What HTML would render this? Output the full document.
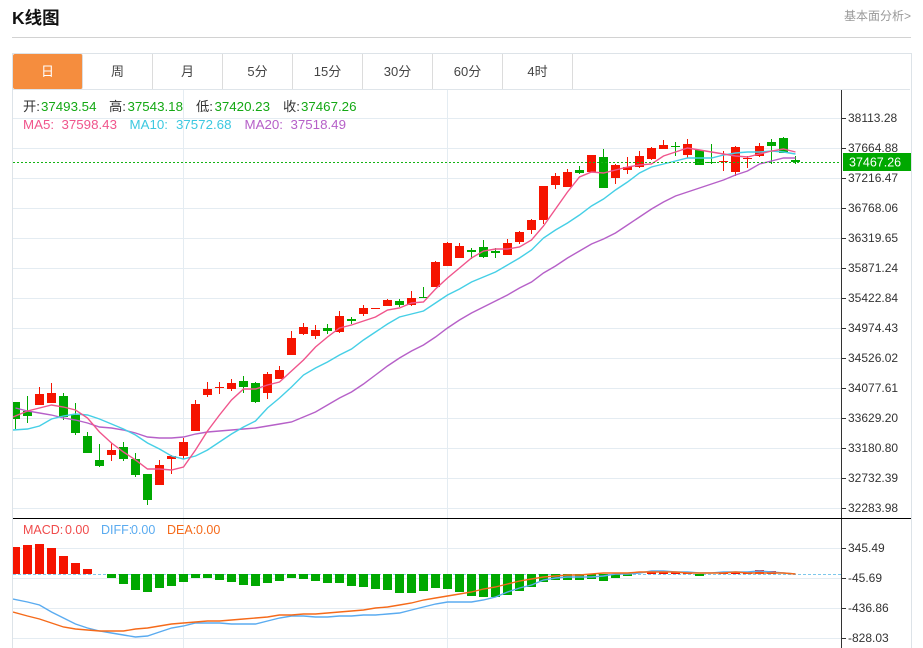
<!DOCTYPE html>
<html lang="zh"><head><meta charset="utf-8"><title>K线图</title>
<style>
html,body{margin:0;padding:0;background:#fff;width:923px;height:648px;overflow:hidden}
body{position:relative;font-family:"Liberation Sans","Noto Sans CJK SC",sans-serif;color:#333}
.a{position:absolute;white-space:nowrap}
.t{position:absolute;top:54px;width:69px;height:35px;line-height:35px;text-align:center;font-size:13px;color:#444;border-right:1px solid #dcdcdc}
svg{position:absolute;left:0;top:0}
svg text{font-family:"Liberation Sans","Noto Sans CJK SC",sans-serif}
</style></head><body>
<div class="a" style="left:12px;top:7px;font-size:17.5px;line-height:22px;font-weight:bold;color:#111">K线图</div>
<div class="a" style="right:12px;top:8px;font-size:12px;line-height:16px;color:#999">基本面分析&gt;</div>
<div class="a" style="left:12px;top:37px;width:899px;height:1px;background:#d2d2d2"></div>
<div class="a" style="left:12px;top:53px;width:898px;height:595px;border:1px solid #dde3e8;border-bottom:0"></div>
<div class="a" style="left:13px;top:89px;width:897px;height:1px;background:#dfe5ea"></div>
<div class="t" style="left:13px;background:#f58d3e;color:#fff;border-radius:2px;border-right:1px solid #dcdcdc">日</div>
<div class="t" style="left:83px">周</div>
<div class="t" style="left:153px">月</div>
<div class="t" style="left:223px">5分</div>
<div class="t" style="left:293px">15分</div>
<div class="t" style="left:363px">30分</div>
<div class="t" style="left:433px">60分</div>
<div class="t" style="left:503px">4时</div>
<svg width="923" height="648" viewBox="0 0 923 648">
<defs><clipPath id="c"><rect x="13" y="90" width="828" height="558"/></clipPath></defs>
<path stroke="#e4ecf2" stroke-width="1" fill="none" d="M13 118.5H841M13 148.5H841M13 178.5H841M13 208.5H841M13 238.5H841M13 268.5H841M13 298.5H841M13 328.5H841M13 358.5H841M13 388.5H841M13 418.5H841M13 448.5H841M13 478.5H841M13 508.5H841M13 548.5H841M13 578.5H841M13 608.5H841M13 638.5H841M183.5 90V648M447.5 90V648"/>
<g clip-path="url(#c)">
<path stroke="#f51400" stroke-width="1" fill="none" d="M39.5 387V405M51.5 383V403M111.5 443V461M159.5 460V485M171.5 455V474M183.5 438V459M195.5 400V431M207.5 382V397M219.5 382V394M231.5 379V391M267.5 372V399M279.5 366V379M291.5 331V355M303.5 323V335M315.5 325V339M339.5 311V333M363.5 305V316M375.5 308V309M387.5 299V306M411.5 291V306M435.5 261V287M447.5 242V266M459.5 243V258M507.5 239V255M519.5 231V244M531.5 219V234M543.5 186V224M555.5 173V189M567.5 169V187M591.5 155V172M615.5 164V184M627.5 157V174M639.5 151V168M651.5 147V160M663.5 140V149M687.5 139V158M723.5 151V171M735.5 146V176M747.5 156V168M759.5 143V157"/>
<path stroke="#00a800" stroke-width="1" fill="none" d="M15.5 402V429M27.5 396V423M63.5 393V420M75.5 403V435M87.5 432V453M99.5 444V467M123.5 442V461M135.5 453V477M147.5 474V505M243.5 376V393M255.5 382V403M327.5 324V334M351.5 317V324M399.5 299V307M423.5 287V298M471.5 248V259M483.5 240V258M495.5 248V258M579.5 166V174M603.5 149V188M675.5 142V156M699.5 150V165M711.5 144V164M771.5 139V164M783.5 137V153M795.5 156V164"/>
<path fill="#f51400" d="M35 394h9V405h-9zM47 393h9V403h-9zM107 450h9V455h-9zM155 465h9V485h-9zM167 456h9V459h-9zM179 442h9V456h-9zM191 404h9V431h-9zM203 389h9V395h-9zM215 387h9V388h-9zM227 383h9V389h-9zM263 374h9V393h-9zM275 370h9V379h-9zM287 338h9V355h-9zM299 327h9V334h-9zM311 330h9V336h-9zM335 316h9V332h-9zM359 308h9V314h-9zM371 308h9V309h-9zM383 300h9V306h-9zM407 298h9V305h-9zM431 262h9V287h-9zM443 243h9V266h-9zM455 246h9V258h-9zM503 243h9V255h-9zM515 232h9V242h-9zM527 220h9V230h-9zM539 186h9V220h-9zM551 176h9V185h-9zM563 172h9V187h-9zM587 155h9V172h-9zM611 165h9V178h-9zM623 167h9V170h-9zM635 156h9V167h-9zM647 148h9V159h-9zM659 145h9V149h-9zM683 144h9V155h-9zM719 161h9V162h-9zM731 147h9V172h-9zM743 158h9V159h-9zM755 146h9V156h-9z"/>
<path fill="#00a800" d="M11 402h9V419h-9zM23 411h9V416h-9zM59 396h9V417h-9zM71 415h9V433h-9zM83 436h9V453h-9zM95 460h9V466h-9zM119 447h9V459h-9zM131 459h9V475h-9zM143 474h9V500h-9zM239 381h9V387h-9zM251 383h9V402h-9zM323 328h9V331h-9zM347 319h9V321h-9zM395 301h9V305h-9zM419 297h9V298h-9zM467 250h9V252h-9zM479 247h9V257h-9zM491 251h9V253h-9zM575 170h9V173h-9zM599 157h9V188h-9zM671 146h9V147h-9zM695 150h9V165h-9zM707 162h9V163h-9zM767 142h9V146h-9zM779 138h9V153h-9zM791 160h9V162h-9z"/>
<polyline fill="none" stroke="#b660c8" stroke-width="1.4" points="15.5,408 27.5,411 39.5,413 51.5,415 63.5,418 75.5,420 87.5,423 99.5,427 111.5,428 123.5,430 135.5,433 147.5,437 159.5,438 171.5,438 183.5,437 195.5,434 207.5,432 219.5,431 231.5,430 243.5,429 255.5,428 267.5,426 279.5,424 291.5,422 303.5,417 315.5,412 327.5,405 339.5,398 351.5,392 363.5,384 375.5,375 387.5,366 399.5,358 411.5,351 423.5,345 435.5,337 447.5,328 459.5,320 471.5,313 483.5,307 495.5,301 507.5,295 519.5,288 531.5,282 543.5,273 555.5,266 567.5,258 579.5,251 591.5,244 603.5,239 615.5,233 627.5,225 639.5,217 651.5,209 663.5,202 675.5,196 687.5,192 699.5,188 711.5,184 723.5,180 735.5,175 747.5,171 759.5,164 771.5,161 783.5,158 795.5,158"/>
<polyline fill="none" stroke="#45cfe6" stroke-width="1.4" points="13,430 27.5,429 39.5,426 51.5,419 63.5,416 75.5,414 87.5,415 99.5,419 111.5,424 123.5,429 135.5,435 147.5,443 159.5,449 171.5,456 183.5,459 195.5,456 207.5,450 219.5,442 231.5,434 243.5,427 255.5,421 267.5,408 279.5,398 291.5,387 303.5,375 315.5,368 327.5,362 339.5,355 351.5,349 363.5,340 375.5,332 387.5,324 399.5,317 411.5,314 423.5,311 435.5,303 447.5,295 459.5,289 471.5,282 483.5,277 495.5,272 507.5,265 519.5,258 531.5,250 543.5,238 555.5,230 567.5,223 579.5,215 591.5,206 603.5,199 615.5,190 627.5,182 639.5,173 651.5,167 663.5,164 675.5,161 687.5,158 699.5,158 711.5,158 723.5,155 735.5,153 747.5,152 759.5,152 771.5,151 783.5,152 795.5,154"/>
<polyline fill="none" stroke="#f0558c" stroke-width="1.4" points="13,417 27.5,411 39.5,408 51.5,405 63.5,407 75.5,410 87.5,418 99.5,432 111.5,443 123.5,452 135.5,460 147.5,469 159.5,469 171.5,470 183.5,467 195.5,450 207.5,431 219.5,415 231.5,400 243.5,389 255.5,389 267.5,385 279.5,382 291.5,371 303.5,360 315.5,347 327.5,337 339.5,328 351.5,325 363.5,321 375.5,317 387.5,310 399.5,308 411.5,303 423.5,302 435.5,289 447.5,278 459.5,268 471.5,258 483.5,251 495.5,249 507.5,249 519.5,247 531.5,240 543.5,226 555.5,209 567.5,192 579.5,177 591.5,172 603.5,173 615.5,170 627.5,167 639.5,165 651.5,164 663.5,156 675.5,152 687.5,148 699.5,150 711.5,152 723.5,154 735.5,156 747.5,157 759.5,154 771.5,151 783.5,149 795.5,152"/>
<path stroke="#14b414" stroke-width="1" stroke-dasharray="2 2" fill="none" d="M13 162.5H841"/>
<path stroke="#7cc8ec" stroke-width="1" stroke-dasharray="3 2" fill="none" d="M13 574.5H841"/>
<path fill="#f51400" d="M11 547h9V574h-9zM23 545h9V574h-9zM35 544h9V574h-9zM47 548h9V574h-9zM59 556h9V574h-9zM71 563h9V574h-9zM83 569h9V574h-9zM623 573h9V574h-9zM647 572h9V574h-9zM659 572h9V574h-9zM671 572h9V574h-9zM683 573h9V574h-9zM719 572h9V574h-9zM731 572h9V574h-9zM743 572h9V574h-9zM755 570h9V574h-9zM767 571h9V574h-9z"/>
<path fill="#00a800" d="M107 574h9V578h-9zM119 574h9V584h-9zM131 574h9V590h-9zM143 574h9V592h-9zM155 574h9V588h-9zM167 574h9V586h-9zM179 574h9V582h-9zM191 574h9V578h-9zM203 574h9V578h-9zM215 574h9V580h-9zM227 574h9V582h-9zM239 574h9V585h-9zM251 574h9V586h-9zM263 574h9V583h-9zM275 574h9V581h-9zM287 574h9V578h-9zM299 574h9V579h-9zM311 574h9V581h-9zM323 574h9V583h-9zM335 574h9V583h-9zM347 574h9V586h-9zM359 574h9V587h-9zM371 574h9V589h-9zM383 574h9V590h-9zM395 574h9V593h-9zM407 574h9V593h-9zM419 574h9V591h-9zM431 574h9V588h-9zM443 574h9V589h-9zM455 574h9V592h-9zM467 574h9V596h-9zM479 574h9V597h-9zM491 574h9V597h-9zM503 574h9V595h-9zM515 574h9V591h-9zM527 574h9V587h-9zM539 574h9V582h-9zM551 574h9V580h-9zM563 574h9V580h-9zM575 574h9V580h-9zM587 574h9V579h-9zM599 574h9V581h-9zM611 574h9V578h-9zM623 574h9V576h-9zM695 574h9V576h-9z"/>
<polyline fill="none" stroke="#5aabf0" stroke-width="1.4" points="13,599 27.5,602 39.5,605 51.5,612 63.5,618 75.5,624 87.5,628 99.5,631 111.5,633 123.5,635 135.5,637 147.5,636 159.5,632 171.5,628 183.5,626 195.5,623 207.5,623 219.5,623 231.5,624 243.5,624 255.5,624 267.5,621 279.5,618 291.5,616 303.5,616 315.5,617 327.5,617 339.5,616 351.5,616 363.5,615 375.5,615 387.5,614 399.5,613 411.5,610 423.5,607 435.5,604 447.5,602 459.5,602 471.5,602 483.5,600 495.5,597 507.5,592 519.5,588 531.5,585 543.5,580 555.5,578 567.5,577 579.5,577 591.5,577 603.5,576 615.5,574 627.5,574 639.5,573 651.5,571 663.5,571 675.5,572 687.5,572 699.5,573 711.5,573 723.5,572 735.5,572 747.5,572 759.5,571 771.5,572 783.5,573 795.5,574"/>
<polyline fill="none" stroke="#f56a1a" stroke-width="1.4" points="13,612 27.5,616 39.5,619 51.5,623 63.5,627 75.5,629 87.5,630 99.5,631 111.5,631 123.5,631 135.5,629 147.5,628 159.5,626 171.5,624 183.5,623 195.5,622 207.5,621 219.5,621 231.5,620 243.5,619 255.5,618 267.5,617 279.5,615 291.5,615 303.5,614 315.5,614 327.5,613 339.5,612 351.5,611 363.5,610 375.5,608 387.5,607 399.5,605 411.5,603 423.5,600 435.5,598 447.5,596 459.5,594 471.5,592 483.5,589 495.5,587 507.5,584 519.5,581 531.5,579 543.5,577 555.5,576 567.5,575 579.5,575 591.5,574 603.5,573 615.5,573 627.5,573 639.5,572 651.5,572 663.5,572 675.5,572 687.5,573 699.5,573 711.5,573 723.5,573 735.5,572 747.5,573 759.5,573 771.5,573 783.5,573 795.5,574"/>
</g>
<path stroke="#333" stroke-width="1" fill="none" d="M841.5 90V648M841 118.5h5M841 148.5h5M841 178.5h5M841 208.5h5M841 238.5h5M841 268.5h5M841 298.5h5M841 328.5h5M841 358.5h5M841 388.5h5M841 418.5h5M841 448.5h5M841 478.5h5M841 508.5h5M841 548.5h5M841 578.5h5M841 608.5h5M841 638.5h5"/>
<path stroke="#000" stroke-width="1" fill="none" d="M13 518.5H911"/>
<g font-size="12" fill="#333">
<text x="848" y="122">38113.28</text><text x="848" y="152">37664.88</text><text x="848" y="182">37216.47</text><text x="848" y="212">36768.06</text><text x="848" y="242">36319.65</text><text x="848" y="272">35871.24</text><text x="848" y="302">35422.84</text><text x="848" y="332">34974.43</text><text x="848" y="362">34526.02</text><text x="848" y="392">34077.61</text><text x="848" y="422">33629.20</text><text x="848" y="452">33180.80</text><text x="848" y="482">32732.39</text><text x="848" y="512">32283.98</text>
<text x="848" y="552">345.49</text><text x="848" y="582">-45.69</text><text x="848" y="612">-436.86</text><text x="848" y="642">-828.03</text>
</g>
<rect x="843" y="153" width="68" height="18" fill="#00a800"/>
<text x="849" y="166.500" font-size="12.500" fill="#fff">37467.26</text>
<g font-size="13.300">
<text x="23" y="111" fill="#333">开:</text><text x="41" y="111" fill="#14a814">37493.54</text>
<text x="109" y="111" fill="#333">高:</text><text x="127.500" y="111" fill="#14a814">37543.18</text>
<text x="196" y="111" fill="#333">低:</text><text x="214.500" y="111" fill="#14a814">37420.23</text>
<text x="283" y="111" fill="#333">收:</text><text x="301" y="111" fill="#14a814">37467.26</text>
<text x="23" y="129" fill="#f0558c">MA5:</text><text x="61.500" y="129" fill="#f0558c">37598.43</text>
<text x="129.500" y="129" fill="#3cc8e0">MA10:</text><text x="176" y="129" fill="#3cc8e0">37572.68</text>
<text x="244.500" y="129" fill="#b660c8">MA20:</text><text x="290.500" y="129" fill="#b660c8">37518.49</text>
</g>
<g font-size="12.500">
<text x="23" y="534" fill="#f04b4b">MACD:</text><text x="65" y="534" fill="#f04b4b">0.00</text>
<text x="101" y="534" fill="#5aabf0">DIFF:</text><text x="131" y="534" fill="#5aabf0">0.00</text>
<text x="167" y="534" fill="#f56a1a">DEA:</text><text x="196" y="534" fill="#f56a1a">0.00</text>
</g>
</svg>
</body></html>
